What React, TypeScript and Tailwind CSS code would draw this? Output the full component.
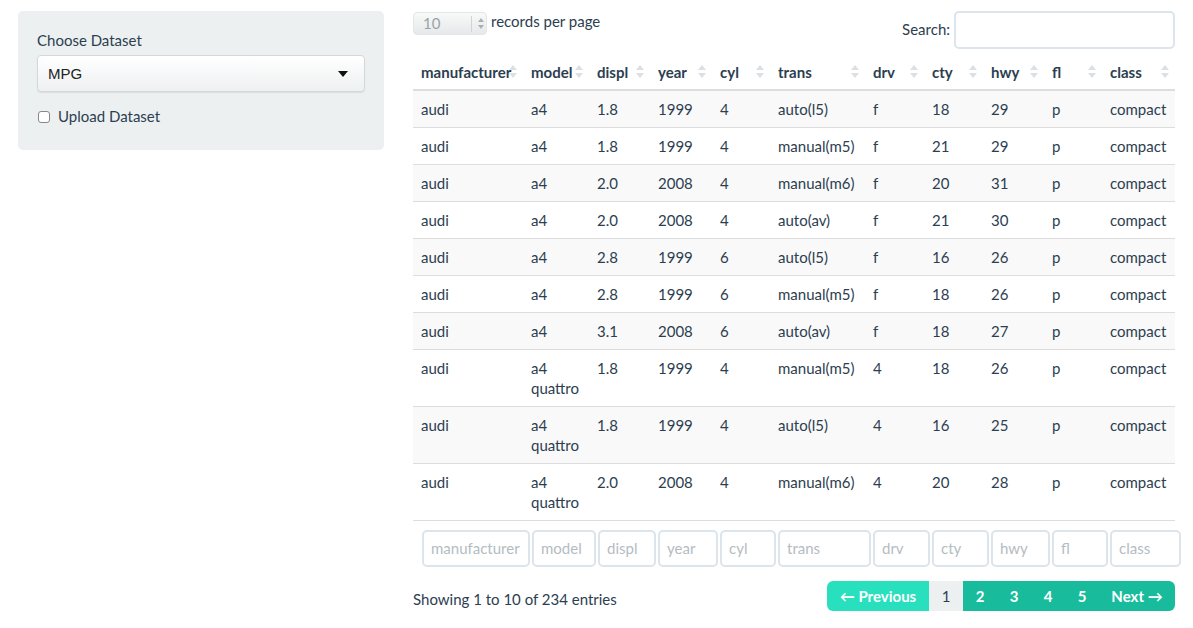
import React from "react";

const cols = [
  { k: "manufacturer", w: 110 },
  { k: "model", w: 66 },
  { k: "displ", w: 61 },
  { k: "year", w: 62 },
  { k: "cyl", w: 58 },
  { k: "trans", w: 95 },
  { k: "drv", w: 59 },
  { k: "cty", w: 59 },
  { k: "hwy", w: 61 },
  { k: "fl", w: 58 },
  { k: "class", w: 73 },
];

const rows: string[][] = [
  ["audi", "a4", "1.8", "1999", "4", "auto(l5)", "f", "18", "29", "p", "compact"],
  ["audi", "a4", "1.8", "1999", "4", "manual(m5)", "f", "21", "29", "p", "compact"],
  ["audi", "a4", "2.0", "2008", "4", "manual(m6)", "f", "20", "31", "p", "compact"],
  ["audi", "a4", "2.0", "2008", "4", "auto(av)", "f", "21", "30", "p", "compact"],
  ["audi", "a4", "2.8", "1999", "6", "auto(l5)", "f", "16", "26", "p", "compact"],
  ["audi", "a4", "2.8", "1999", "6", "manual(m5)", "f", "18", "26", "p", "compact"],
  ["audi", "a4", "3.1", "2008", "6", "auto(av)", "f", "18", "27", "p", "compact"],
  ["audi", "a4 quattro", "1.8", "1999", "4", "manual(m5)", "4", "18", "26", "p", "compact"],
  ["audi", "a4 quattro", "1.8", "1999", "4", "auto(l5)", "4", "16", "25", "p", "compact"],
  ["audi", "a4 quattro", "2.0", "2008", "4", "manual(m6)", "4", "20", "28", "p", "compact"],
];

const filters = [
  { k: "manufacturer", w: 108 },
  { k: "model", w: 64 },
  { k: "displ", w: 58 },
  { k: "year", w: 60 },
  { k: "cyl", w: 56 },
  { k: "trans", w: 93 },
  { k: "drv", w: 57 },
  { k: "cty", w: 57 },
  { k: "hwy", w: 59 },
  { k: "fl", w: 56 },
  { k: "class", w: 71 },
];

function SortIcon() {
  return (
    <svg width="8" height="13" viewBox="0 0 8 13" className="absolute right-[6px] top-[12px]">
      <path d="M4 0 L8 5 L0 5 Z" fill="#dde0e3" />
      <path d="M4 13 L8 8 L0 8 Z" fill="#dde0e3" />
    </svg>
  );
}

export default function App() {
  return (
    <div
      className="w-[1193px] h-[628px] bg-white text-[#2c3e50] text-[15px] leading-[21px] flex"
      style={{ fontFamily: "Lato, 'Open Sans', sans-serif" }}
    >
      {/* Sidebar */}
      <div className="pl-[18px] pt-[11px] w-[413px] shrink-0">
        <div className="w-[366px] h-[139px] bg-[#ecf0f1] rounded-[5px] px-[19px] pt-[19px]">
          <div className="mb-[4px] leading-[21px]">Choose Dataset</div>
          <div className="h-[37px] w-[328px] rounded-[4px] border border-[#d3d8db] bg-gradient-to-b from-[#ffffff] to-[#eef0f1] flex items-center justify-between pl-[10px] pr-[16px] shadow-[0_1px_1px_rgba(0,0,0,0.08)]">
            <span className="text-[15px] text-[#222]" style={{ fontFamily: "'Liberation Sans', Arial, sans-serif" }}>
              MPG
            </span>
            <svg width="10" height="6" viewBox="0 0 10 6">
              <path d="M0 0 L10 0 L5 6 Z" fill="#111" />
            </svg>
          </div>
          <div className="flex items-center mt-[14px]">
            <div className="w-[12px] h-[12px] border border-[#888] rounded-[3px] bg-white mr-[8px] ml-[1px]" />
            <span>Upload Dataset</span>
          </div>
        </div>
      </div>

      {/* Main */}
      <div className="w-[762px] shrink-0 flex flex-col">
        <div className="flex justify-between pt-[11px] h-[53px]">
          <div className="flex items-start pt-[1px]">
            <div className="w-[74px] h-[23px] rounded-[4px] border border-[#e3e6e8] bg-gradient-to-b from-[#f8f9f9] to-[#e6e9ea] flex items-center relative">
              <span className="pl-[9px] text-[#9aa3a8] text-[15px]">10</span>
              <div className="absolute left-[57px] top-[3px] h-[16px] w-px bg-[#d0d4d6]" />
              <svg width="6" height="11" viewBox="0 0 6 11" className="absolute left-[64px] top-[5px]">
                <path d="M3 0 L6 4 L0 4 Z" fill="#aab0b4" />
                <path d="M3 11 L6 7 L0 7 Z" fill="#aab0b4" />
              </svg>
            </div>
            <span className="ml-[4px] -mt-[1px]">records per page</span>
          </div>
          <div className="flex items-center h-[38px]">
            <span className="mr-[4px] -mt-[2px]">Search:</span>
            <div className="w-[221px] h-[38px] border-2 border-[#dce4ec] rounded-[5px] bg-white" />
          </div>
        </div>

        <table className="table-fixed border-collapse w-[762px]">
          <colgroup>
            {cols.map((c) => (
              <col key={c.k} style={{ width: c.w }} />
            ))}
          </colgroup>
          <thead>
            <tr className="border-b-2 border-[#dddddd]">
              {cols.map((c) => (
                <th key={c.k} className="relative text-left font-bold px-[8px] pt-[9px] pb-[7px] leading-[20px] h-[36px] align-middle">
                  {c.k}
                  <SortIcon />
                </th>
              ))}
            </tr>
          </thead>
          <tbody>
            {rows.map((r, i) => (
              <tr key={i} className={`border-t border-[#dddddd] ${i % 2 === 0 ? "bg-[#f9f9f9]" : "bg-white"}`}>
                {r.map((v, j) => (
                  <td key={j} className="px-[8px] py-[8px] leading-[20px] align-top">
                    {v}
                  </td>
                ))}
              </tr>
            ))}
            <tr className="border-t border-[#dddddd]">
              <td colSpan={11} className="h-0 p-0" />
            </tr>
          </tbody>
        </table>

        <div className="flex gap-[2px] ml-[9px] mt-[9px]">
          {filters.map((f) => (
            <div
              key={f.k}
              className="h-[37px] border-2 border-[#dce4ec] rounded-[5px] bg-white flex items-center pl-[7px] text-[#b4bcc2] shrink-0"
              style={{ width: f.w }}
            >
              {f.k}
            </div>
          ))}
        </div>

        <div className="flex justify-between items-start mt-[14px]">
          <span className="mt-[8px]">Showing 1 to 10 of 234 entries</span>
          <div className="flex h-[30px] rounded-[6px] overflow-hidden font-bold text-white">
            <div className="w-[102px] bg-[#28e0bd] flex items-center justify-center">← Previous</div>
            <div className="w-[34px] bg-[#ecf0f1] text-[#2c3e50] font-normal flex items-center justify-center">1</div>
            {["2", "3", "4", "5"].map((n) => (
              <div key={n} className="w-[34px] bg-[#18bc9c] flex items-center justify-center">
                {n}
              </div>
            ))}
            <div className="w-[76px] bg-[#18bc9c] flex items-center justify-center">Next →</div>
          </div>
        </div>
      </div>
    </div>
  );
}
